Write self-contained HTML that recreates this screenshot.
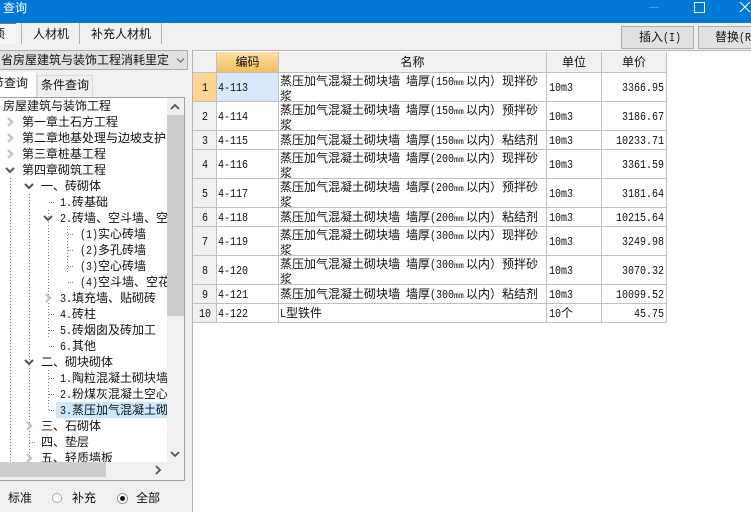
<!DOCTYPE html>
<html><head><meta charset="utf-8">
<style>
html,body{margin:0;padding:0}
body{width:751px;height:512px;position:relative;overflow:hidden;background:#f0f0f0;font:12px/16px "WenQuanYi Zen Hei","Noto Sans CJK SC",sans-serif;color:#111}
.a,.t{position:absolute;white-space:nowrap}
.t{height:16px;line-height:16px}
i{display:inline-block;font:normal 12px/12px "Liberation Mono",monospace;transform:scaleX(.8333);white-space:nowrap;vertical-align:baseline}
i{transform-origin:0 50%}
.w1{width:6px}.w2{width:12px}.w3{width:18px}.w4{width:24px}.w5{width:30px}.w7{width:42px}.w8{width:48px}
b{display:inline-block;width:12px;font:normal 8px/8px "Liberation Mono",monospace;letter-spacing:.2px}
em{display:inline-block;width:6px}
u{text-decoration:none;position:relative;top:1px}
.v{position:absolute;width:1px;background:repeating-linear-gradient(#808080 0 1px,transparent 1px 3px)}
.h{position:absolute;height:1px;width:6px;background:repeating-linear-gradient(90deg,#808080 0 1px,transparent 1px 2px)}
svg{position:absolute;overflow:visible}
table{position:absolute;left:193px;top:52px;border-collapse:separate;border-spacing:0;table-layout:fixed;width:474px;background:#fff}
td{border-right:1px solid #c0c0c0;border-bottom:1px solid #c0c0c0;box-sizing:border-box;padding:0;white-space:nowrap;overflow:hidden;line-height:13px}
td.r{background:#f0f0f0;text-align:center}
td.c{padding-left:1px}
td.n{padding-left:1px}
td.u{padding-left:2px}
td.p{text-align:right;padding-right:2px}
tr.hd td{background:#f0f0f0;text-align:center;line-height:20px}
tr.hd td.o{background:linear-gradient(#fcdfa6,#f3bf5f)}
</style></head><body>
<div class="a" style="left:0;top:0;width:751px;height:23px;background:#0078d7"></div>
<div class="t" style="left:3px;top:0;color:#fff">查询</div>
<div class="a" style="left:649px;top:7px;width:10px;height:1px;background:#3f9ae3"></div>
<div class="a" style="left:694px;top:2px;width:9px;height:9px;border:1px solid #fff"></div>
<svg style="left:740px;top:2px" width="11" height="11"><path d="M0 0L10 10M10 0L0 10" stroke="#fff" stroke-width="1"/></svg>

<div class="a" style="left:0;top:23px;width:16px;height:21px;background:repeating-conic-gradient(#fff 0 25%,#f0f0f0 0 50%) 0 0/2px 2px"></div>
<div class="a" style="left:0;top:23px;width:16px;height:1px;background:#777"></div>
<div class="t" style="left:-7px;top:26px">项</div>
<div class="a" style="left:21px;top:23px;width:1px;height:21px;background:#b0b0b0"></div>
<div class="t" style="left:33px;top:26px">人材机</div>
<div class="a" style="left:79px;top:23px;width:1px;height:21px;background:#b0b0b0"></div>
<div class="t" style="left:91px;top:26px">补充人材机</div>
<div class="a" style="left:161px;top:23px;width:1px;height:21px;background:#b0b0b0"></div>

<div class="a" style="left:621px;top:26px;width:71px;height:21px;background:#e1e1e1;border:1px solid #adadad"></div>
<div class="t" style="left:639px;top:29px">插入<i class="w3">(I)</i></div>
<div class="a" style="left:698px;top:26px;width:70px;height:21px;background:#e1e1e1;border:1px solid #adadad"></div>
<div class="t" style="left:715px;top:29px">替换<i class="w3">(R)</i></div>
<div class="a" style="left:193px;top:50px;width:558px;height:1px;background:#b4b4b4"></div>
<div class="a" style="left:193px;top:51px;width:558px;height:461px;background:#fff"></div>
<div class="a" style="left:192px;top:50px;width:1px;height:462px;background:#b4b4b4"></div>

<div class="a" style="left:0;top:50px;width:187px;height:18px;background:#e1e1e1;border:1px solid #adadad;border-left:0"></div>
<div class="t" style="left:1px;top:52px">省房屋建筑与装饰工程消耗里定</div>
<svg style="left:176px;top:58px" width="10" height="6"><path d="M1 0.5L4.5 4L8 0.5" fill="none" stroke="#666" stroke-width="1.2"/></svg>

<div class="a" style="left:0;top:72px;width:36px;height:25px;background:#fff;border-right:1px solid #d9d9d9"></div>
<div class="t" style="left:-8px;top:75px">节查询</div>
<div class="a" style="left:37px;top:75px;width:54px;height:22px;background:#f0f0f0;border:1px solid #d9d9d9;border-bottom:0"></div>
<div class="t" style="left:41px;top:77px">条件查询</div>

<div class="a" style="left:0;top:97px;width:185px;height:384px;background:#f0f0f0;border-top:1px solid #a0a0a0;border-right:1px solid #a0a0a0;border-bottom:1px solid #a0a0a0;box-sizing:border-box"></div>
<div class="a" style="left:0;top:98px;width:167px;height:364px;background:#fff;overflow:hidden" id="tree">
<div class="a" style="left:56px;top:304px;width:111px;height:16px;background:#cce8ff"></div>
<div class="v" style="left:10px;top:80px;height:284px"></div>
<div class="v" style="left:29px;top:96px;height:264px"></div>
<div class="v" style="left:48px;top:112px;height:128px"></div>
<div class="v" style="left:48px;top:272px;height:40px"></div>
<div class="v" style="left:67px;top:128px;height:48px"></div>
<div class="h" style="left:49px;top:104px"></div>
<div class="h" style="left:49px;top:216px"></div>
<div class="h" style="left:49px;top:232px"></div>
<div class="h" style="left:49px;top:248px"></div>
<div class="h" style="left:49px;top:280px"></div>
<div class="h" style="left:49px;top:296px"></div>
<div class="h" style="left:49px;top:312px"></div>
<div class="h" style="left:68px;top:136px"></div>
<div class="h" style="left:68px;top:152px"></div>
<div class="h" style="left:68px;top:168px"></div>
<div class="h" style="left:68px;top:184px"></div>
<div class="h" style="left:30px;top:344px"></div>
<div class="t" style="left:3px;top:0px">房屋建筑与装饰工程</div>
<div class="t" style="left:22px;top:16px">第一章土石方工程</div>
<div class="t" style="left:22px;top:32px">第二章地基处理与边坡支护</div>
<div class="t" style="left:22px;top:48px">第三章桩基工程</div>
<div class="t" style="left:22px;top:64px">第四章砌筑工程</div>
<div class="t" style="left:41px;top:80px">一、砖砌体</div>
<div class="t" style="left:60px;top:96px"><i class="w2">1.</i>砖基础</div>
<div class="t" style="left:60px;top:112px"><i class="w2">2.</i>砖墙、空斗墙、空</div>
<div class="t" style="left:80px;top:128px"><i class="w3">(1)</i>实心砖墙</div>
<div class="t" style="left:80px;top:144px"><i class="w3">(2)</i>多孔砖墙</div>
<div class="t" style="left:80px;top:160px"><i class="w3">(3)</i>空心砖墙</div>
<div class="t" style="left:80px;top:176px"><i class="w3">(4)</i>空斗墙、空花</div>
<div class="t" style="left:60px;top:192px"><i class="w2">3.</i>填充墙、贴砌砖</div>
<div class="t" style="left:60px;top:208px"><i class="w2">4.</i>砖柱</div>
<div class="t" style="left:60px;top:224px"><i class="w2">5.</i>砖烟囱及砖加工</div>
<div class="t" style="left:60px;top:240px"><i class="w2">6.</i>其他</div>
<div class="t" style="left:41px;top:256px">二、砌块砌体</div>
<div class="t" style="left:60px;top:272px"><i class="w2">1.</i>陶粒混凝土砌块墙</div>
<div class="t" style="left:60px;top:288px"><i class="w2">2.</i>粉煤灰混凝土空心</div>
<div class="t" style="left:60px;top:304px"><i class="w2">3.</i>蒸压加气混凝土砌</div>
<div class="t" style="left:41px;top:320px">三、石砌体</div>
<div class="t" style="left:41px;top:336px">四、垫层</div>
<div class="t" style="left:41px;top:352px">五、轻质墙板</div>
<svg style="left:0;top:0" width="167" height="364">
<g fill="none" stroke="#c4c4c4" stroke-width="2.4">
<path d="M8 20L12 24L8 28"/><path d="M8 36L12 40L8 44"/><path d="M8 52L12 56L8 60"/>
<path d="M46 196L50 200L46 204"/><path d="M27 324L31 328L27 332"/><path d="M27 356L31 360L27 364"/>
</g>
<g fill="none" stroke="#555" stroke-width="2">
<path d="M6 70L10 74L14 70"/><path d="M25 86L29 90L33 86"/><path d="M44 118L48 122L52 118"/><path d="M25 262L29 266L33 262"/>
</g>
</svg>
</div>
<div class="a" style="left:167px;top:98px;width:17px;height:364px;background:#f0f0f0"></div>
<div class="a" style="left:167px;top:115px;width:17px;height:201px;background:#cdcdcd"></div>
<svg style="left:170px;top:104px" width="10" height="6"><path d="M1 5L5 1L9 5" fill="none" stroke="#555" stroke-width="1.8"/></svg>
<svg style="left:170px;top:451px" width="10" height="6"><path d="M1 1L5 5L9 1" fill="none" stroke="#555" stroke-width="1.8"/></svg>
<div class="a" style="left:0;top:462px;width:106px;height:15px;background:#cdcdcd"></div>
<svg style="left:155px;top:465px" width="7" height="10"><path d="M1 1L5 5L1 9" fill="none" stroke="#555" stroke-width="1.8"/></svg>

<div class="t" style="left:8px;top:490px">标准</div>
<div class="a" style="left:52px;top:493px;width:8px;height:8px;border:1px solid #aaa;border-radius:50%;background:#fff"></div>
<div class="t" style="left:72px;top:490px">补充</div>
<div class="a" style="left:117px;top:493px;width:9px;height:9px;border:1px solid #999;border-radius:50%;background:#fff"></div>
<div class="a" style="left:120px;top:496px;width:5px;height:5px;border-radius:50%;background:#111"></div>
<div class="t" style="left:136px;top:490px">全部</div>

<table>
<colgroup><col style="width:24px"><col style="width:62px"><col style="width:268px"><col style="width:55px"><col style="width:65px"></colgroup>
<tr class="hd" style="height:21px"><td></td><td class="o">编码</td><td>名称</td><td>单位</td><td>单价</td></tr>
<tr style="height:29px"><td class="r" style="background:#ffd591"><i class="w1">1</i></td><td class="c" style="background:#d8e8f8"><i class="w5">4-113</i></td><td class="n">蒸压加气混凝土砌块墙<em></em>墙厚<i class="w4">(150</i><b>mm</b>以内）现拌砂<br><u>浆</u></td><td class="u"><i class="w4">10m3</i></td><td class="p"><i class="w7">3366.95</i></td></tr>
<tr style="height:29px"><td class="r"><i class="w1">2</i></td><td class="c"><i class="w5">4-114</i></td><td class="n">蒸压加气混凝土砌块墙<em></em>墙厚<i class="w4">(150</i><b>mm</b>以内）预拌砂<br><u>浆</u></td><td class="u"><i class="w4">10m3</i></td><td class="p"><i class="w7">3186.67</i></td></tr>
<tr style="height:19px"><td class="r"><i class="w1">3</i></td><td class="c"><i class="w5">4-115</i></td><td class="n">蒸压加气混凝土砌块墙<em></em>墙厚<i class="w4">(150</i><b>mm</b>以内）粘结剂</td><td class="u"><i class="w4">10m3</i></td><td class="p"><i class="w8">10233.71</i></td></tr>
<tr style="height:29px"><td class="r"><i class="w1">4</i></td><td class="c"><i class="w5">4-116</i></td><td class="n">蒸压加气混凝土砌块墙<em></em>墙厚<i class="w4">(200</i><b>mm</b>以内）现拌砂<br><u>浆</u></td><td class="u"><i class="w4">10m3</i></td><td class="p"><i class="w7">3361.59</i></td></tr>
<tr style="height:29px"><td class="r"><i class="w1">5</i></td><td class="c"><i class="w5">4-117</i></td><td class="n">蒸压加气混凝土砌块墙<em></em>墙厚<i class="w4">(200</i><b>mm</b>以内）预拌砂<br><u>浆</u></td><td class="u"><i class="w4">10m3</i></td><td class="p"><i class="w7">3181.64</i></td></tr>
<tr style="height:19px"><td class="r"><i class="w1">6</i></td><td class="c"><i class="w5">4-118</i></td><td class="n">蒸压加气混凝土砌块墙<em></em>墙厚<i class="w4">(200</i><b>mm</b>以内）粘结剂</td><td class="u"><i class="w4">10m3</i></td><td class="p"><i class="w8">10215.64</i></td></tr>
<tr style="height:29px"><td class="r"><i class="w1">7</i></td><td class="c"><i class="w5">4-119</i></td><td class="n">蒸压加气混凝土砌块墙<em></em>墙厚<i class="w4">(300</i><b>mm</b>以内）现拌砂<br><u>浆</u></td><td class="u"><i class="w4">10m3</i></td><td class="p"><i class="w7">3249.98</i></td></tr>
<tr style="height:29px"><td class="r"><i class="w1">8</i></td><td class="c"><i class="w5">4-120</i></td><td class="n">蒸压加气混凝土砌块墙<em></em>墙厚<i class="w4">(300</i><b>mm</b>以内）预拌砂<br><u>浆</u></td><td class="u"><i class="w4">10m3</i></td><td class="p"><i class="w7">3070.32</i></td></tr>
<tr style="height:19px"><td class="r"><i class="w1">9</i></td><td class="c"><i class="w5">4-121</i></td><td class="n">蒸压加气混凝土砌块墙<em></em>墙厚<i class="w4">(300</i><b>mm</b>以内）粘结剂</td><td class="u"><i class="w4">10m3</i></td><td class="p"><i class="w8">10099.52</i></td></tr>
<tr style="height:19px"><td class="r"><i class="w2">10</i></td><td class="c"><i class="w5">4-122</i></td><td class="n"><i class="w1">L</i>型铁件</td><td class="u"><i class="w2">10</i>个</td><td class="p"><i class="w5">45.75</i></td></tr>
</table>
</body></html>
